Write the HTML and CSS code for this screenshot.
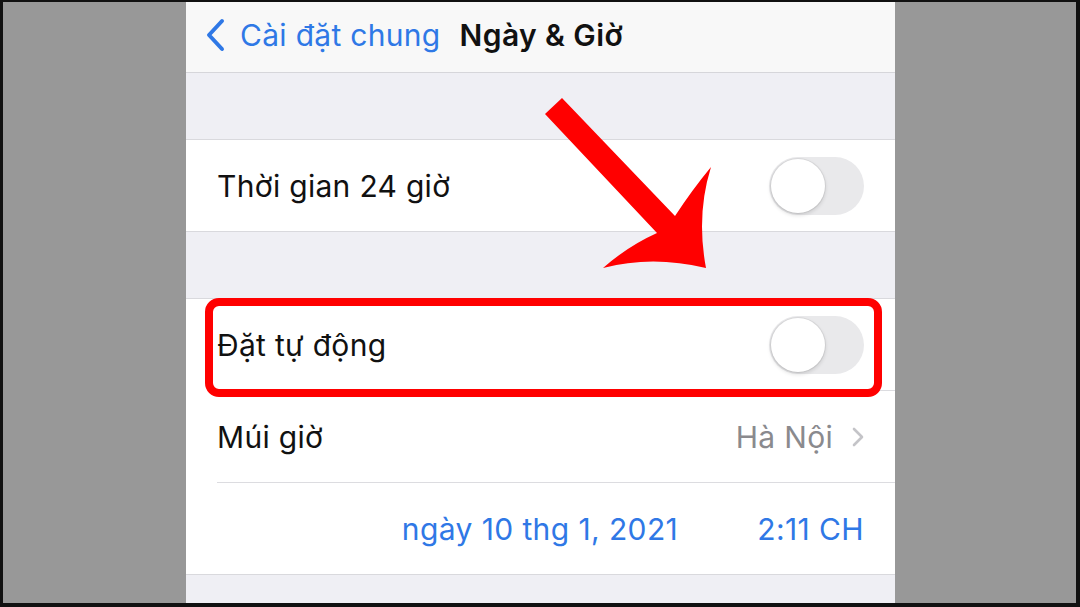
FILE: index.html
```html
<!DOCTYPE html>
<html lang="vi">
<head>
<meta charset="utf-8">
<link rel="stylesheet" href="styles.css">
</head>
<body>
<div class="frame">
  <div class="side"></div>
  <div class="phone">
    <div class="nav">
      <svg class="back" width="22" height="34" viewBox="0 0 22 34"><path d="M18 3 L5 17 L18 31" fill="none" stroke="#2f78e6" stroke-width="4" stroke-linecap="round" stroke-linejoin="round"/></svg>
      <span class="back-label">Cài đặt chung</span>
      <span class="title">Ngày &amp; Giờ</span>
    </div>
    <div class="gap"></div>
    <div class="group">
      <div class="row">
        <span class="label">Thời gian 24 giờ</span>
        <span class="toggle"><span class="knob"></span></span>
      </div>
    </div>
    <div class="gap"></div>
    <div class="group">
      <div class="row highlighted">
        <span class="label">Đặt tự động</span>
        <span class="toggle"><span class="knob"></span></span>
      </div>
      <div class="row sep">
        <span class="label">Múi giờ</span>
        <span class="value">Hà Nội
          <svg class="chev" width="12" height="20" viewBox="0 0 12 20"><path d="M2 2 L10 10 L2 18" fill="none" stroke="#c4c4c8" stroke-width="2.6" stroke-linecap="round" stroke-linejoin="round"/></svg>
        </span>
      </div>
      <div class="row sep date-row">
        <span class="blue">ngày 10 thg 1, 2021</span>
        <span class="blue">2:11 CH</span>
      </div>
    </div>
    <div class="gap tail"></div>
  </div>
  <div class="side"></div>
  <svg class="arrow" viewBox="0 0 1080 607" width="1080" height="607">
    <path d="M545 114 L562 98 L675 216 Q692 190 711 167 Q696 215 706 268 Q652 255 603 268 Q628 246 657 233 Z" fill="#ff0000"/>
  </svg>
</div>
</body>
</html>
```
FILE: styles.css
```css
html, body {
  margin: 0;
  padding: 0;
  background: #000;
}
body {
  width: 1080px;
  height: 607px;
  overflow: hidden;
  font-family: Inter, "Liberation Sans", sans-serif;
}
.frame {
  position: relative;
  box-sizing: border-box;
  width: 1080px;
  height: 607px;
  border-style: solid;
  border-color: #111;
  border-width: 2px 4px 4px 3px;
  background: #989898;
  display: flex;
}
.side {
  flex: 1;
  background: #989898;
}
.phone {
  width: 709px;
  flex: none;
  background: #efeff4;
  display: flex;
  flex-direction: column;
}
.frame > .side:first-child {
  flex: none;
  width: 183px;
}
.nav {
  flex: none;
  background: #f8f8f8;
  border-bottom: 1px solid #d6d6da;
  display: flex;
  align-items: center;
  padding-left: 18px;
  padding-bottom: 4px;
  box-sizing: border-box;
  height: 71px;
}
.back {
  margin-right: 14px;
}
.back-label {
  color: #2f78e6;
  font-size: 30px;
  letter-spacing: 0.3px;
}
.title {
  margin-left: 19px;
  font-size: 30px;
  font-weight: 600;
  color: #111;
  letter-spacing: 0.4px;
}
.gap {
  height: 66px;
  flex: none;
}
.group {
  background: #fff;
  border-top: 1px solid #d9d9dd;
  border-bottom: 1px solid #d9d9dd;
}
.row {
  height: 91px;
  box-sizing: border-box;
  display: flex;
  align-items: center;
  justify-content: space-between;
  padding: 0 31px;
  position: relative;
}
.row.sep::before {
  content: "";
  position: absolute;
  left: 31px;
  right: 0;
  top: -1px;
  height: 1px;
  background: #dcdce0;
}
.row.sep {
  margin-top: 1px;
}
.label {
  font-size: 30px;
  color: #111;
  letter-spacing: 0.3px;
}
.toggle {
  width: 95px;
  height: 58px;
  border-radius: 29px;
  background: #e9e9eb;
  position: relative;
  box-sizing: border-box;
}
.knob {
  position: absolute;
  left: 2px;
  top: 2px;
  width: 54px;
  height: 54px;
  border-radius: 50%;
  background: #fff;
  box-shadow: 0 2px 4px rgba(0,0,0,0.15), 0 0 0 1px rgba(0,0,0,0.06);
}
.highlighted {
  z-index: 2;
}
.highlighted::after {
  content: "";
  position: absolute;
  left: 19px;
  right: 13px;
  top: -1px;
  bottom: -7px;
  border: 8px solid #ff0000;
  border-radius: 14px;
  pointer-events: none;
}
.value {
  display: flex;
  align-items: center;
  gap: 19px;
  font-size: 30px;
  color: #8a8a8e;
  letter-spacing: 0.3px;
}
.date-row {
  justify-content: flex-end;
  gap: 79px;
}
.blue {
  color: #2f78e6;
  font-size: 30px;
  letter-spacing: 0.4px;
}
.tail {
  flex: 1;
}
.arrow {
  position: absolute;
  left: -3px;
  top: -2px;
  pointer-events: none;
  z-index: 3;
}
```
